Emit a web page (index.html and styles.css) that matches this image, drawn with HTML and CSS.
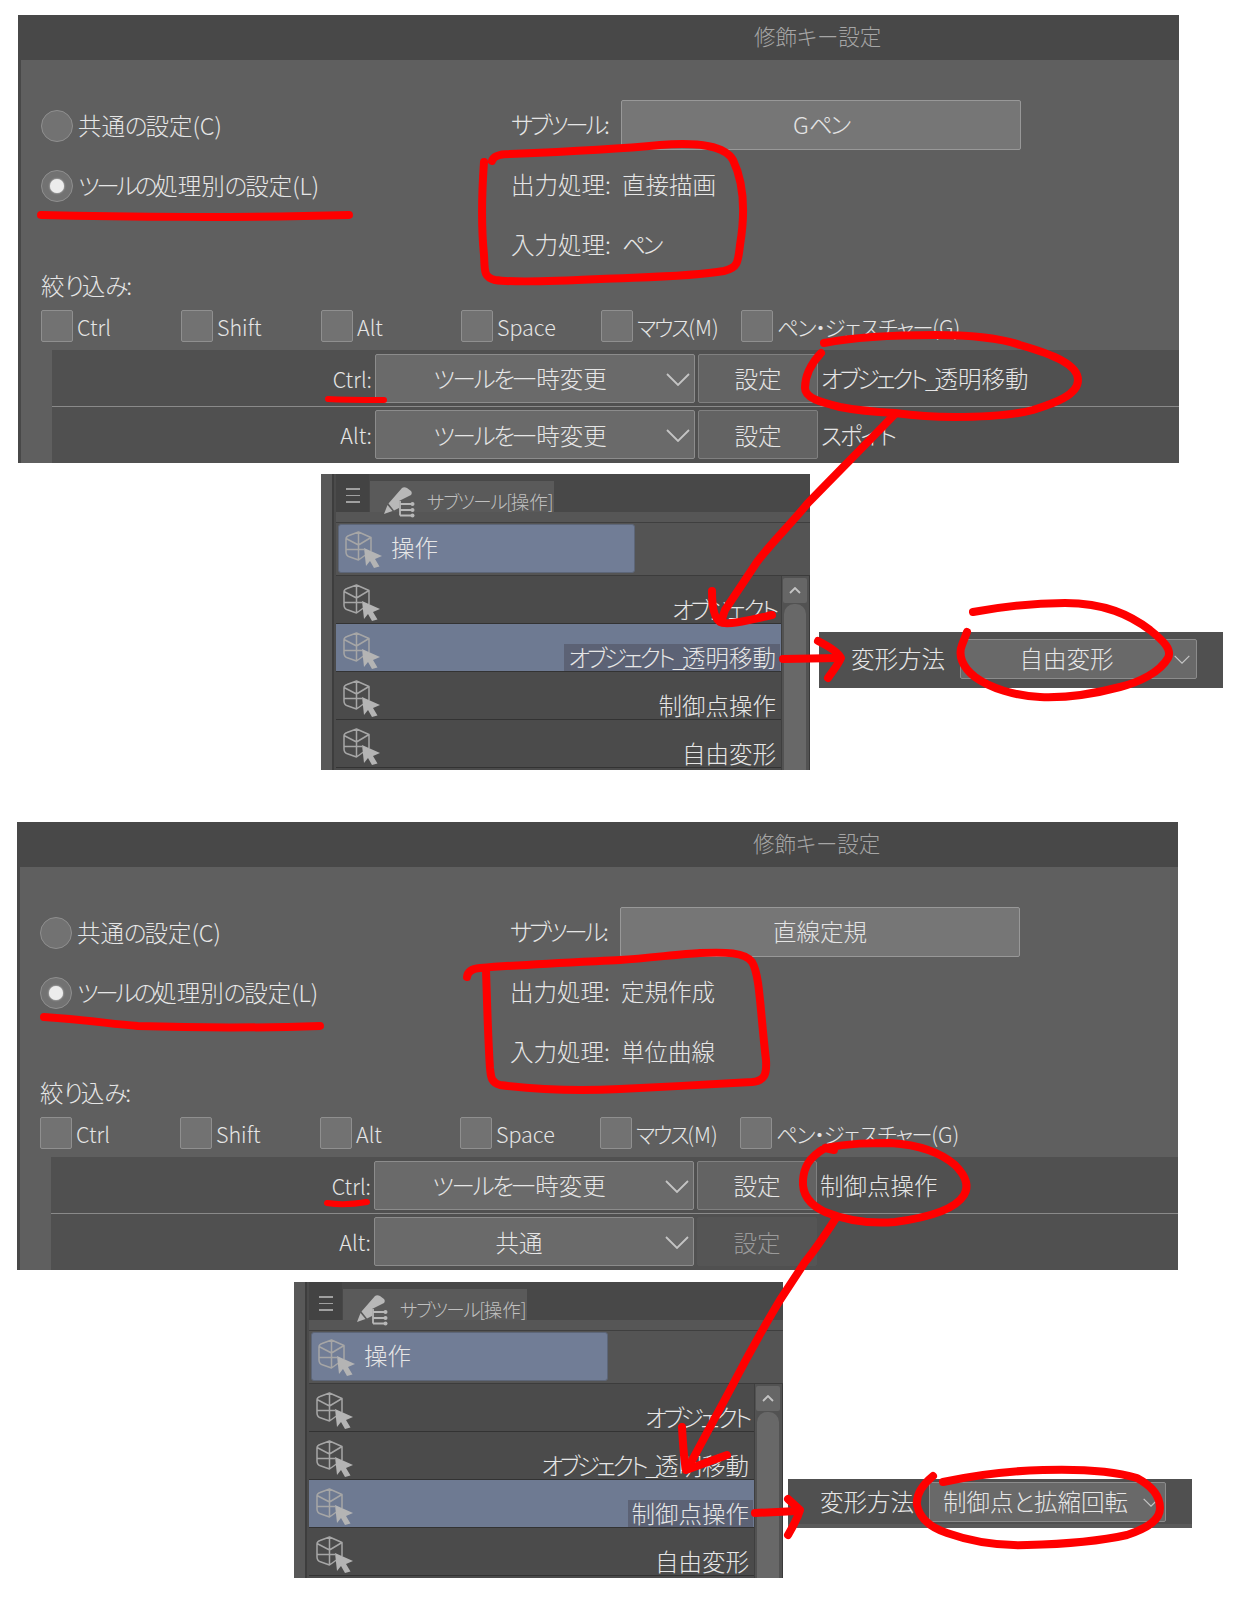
FILE: index.html
```html
<!DOCTYPE html>
<html lang="ja">
<head>
<meta charset="utf-8">
<title>修飾キー設定</title>
<link rel="stylesheet" href="styles.css">
</head>
<body>
<svg class="defs" aria-hidden="true">
  <symbol id="i-cube" viewBox="0 0 37 37">
    <path class="cube" d="M13.5 1 L26 6.500 V20 L13.5 29 L5 26 Q1 25 1 21 V8 Q1 5.500 4 4.500 Z M1 7.500 L13.500 14 L26 6.500 M13.500 1 V29 M1 18.500 H19"/>
    <path class="cursor" d="M19 17 L37 25 L30 28 L34.500 35.500 L29 37 L25 30 L21 35 Z"/>
  </symbol>
  <symbol id="i-tab" viewBox="0 0 31 31">
    <path class="tab-pen" d="M0 27 L3.500 18 L6 21 L8.500 24 Z M4.500 16.500 L18 1 Q20 -0.500 23 1 L27 4 Q28.500 6 27 8 L19 12 L15 14 V21 L10 23.500 Z"/>
    <path class="tab-tree" d="M16 17 H28 M16 23 H28 M16 28.500 H28 M16 14 V28.500"/>
    <circle class="tab-dot" cx="28.500" cy="17" r="2"/><circle class="tab-dot" cx="28.500" cy="23" r="2"/><circle class="tab-dot" cx="28.500" cy="28.500" r="2"/>
  </symbol>
  <symbol id="i-chev" viewBox="0 0 24 13"><path class="chev" d="M1 1 L12 12 L23 1"/></symbol>
</svg>

<section class="dialog dialog--a">
  <header class="dialog-title">修飾キー設定</header>
  <div class="dialog-body">
    <div class="form">
      <label class="radio"><span class="radio-dot"></span><span>共通<span class="k">の</span>設定(C)</span></label>
      <span class="form-label"><span class="k2">サブツール</span>:</span>
      <div class="tool-btn">G<span class="k">ペン</span></div>
      <label class="radio"><span class="radio-dot is-on"></span><span><span class="k2">ツールの</span>処理別<span class="k">の</span>設定(L)</span></label>
      <span class="form-label">出力処理:</span>
      <span class="form-value">直接描画</span>
      <span></span>
      <span class="form-label">入力処理:</span>
      <span class="form-value"><span class="k2">ペン</span></span>
    </div>
    <div class="filter-title"><span>絞<span class="k">り</span>込<span class="k">み</span>:</span></div>
    <div class="filters">
      <label class="check"><span class="check-box"></span>Ctrl</label>
      <label class="check"><span class="check-box"></span>Shift</label>
      <label class="check"><span class="check-box"></span>Alt</label>
      <label class="check"><span class="check-box"></span>Space</label>
      <label class="check"><span class="check-box"></span><span><span class="k">マウス</span>(M)</span></label>
      <label class="check"><span class="check-box"></span><span><span class="k1">ペン・ジェスチャー</span>(G)</span></label>
    </div>
    <div class="keys">
      <div class="key-row key-row--line">
        <span class="key-name">Ctrl:</span>
        <div class="select"><span><span class="k">ツールを</span>一時変更</span><svg class="select-chev"><use href="#i-chev"/></svg></div>
        <div class="set-btn">設定</div>
        <span class="key-tool"><span class="k2">オブジェクト_</span>透明移動</span>
      </div>
      <div class="key-row">
        <span class="key-name">Alt:</span>
        <div class="select"><span><span class="k">ツールを</span>一時変更</span><svg class="select-chev"><use href="#i-chev"/></svg></div>
        <div class="set-btn">設定</div>
        <span class="key-tool"><span class="k">スポイト</span></span>
      </div>
    </div>
  </div>
</section>

<section class="subtool subtool--a">
  <div class="subtool-rail"></div>
  <div class="subtool-main">
    <div class="subtool-tabs">
      <div class="menu-btn"><span></span><span></span><span></span></div>
      <div class="tab"><svg class="tab-icon"><use href="#i-tab"/></svg><span class="k1">サブツール[</span>操作]</div>
    </div>
    <div class="group-row">
      <div class="group-chip"><svg class="tool-icon"><use href="#i-cube"/></svg>操作</div>
    </div>
    <div class="list-wrap">
      <ul class="list">
        <li class="item"><svg class="tool-icon"><use href="#i-cube"/></svg><span class="item-name"><span class="k2">オブジェクト</span></span></li>
        <li class="item is-selected"><svg class="tool-icon"><use href="#i-cube"/></svg><span class="item-name"><span class="k2">オブジェクト_</span>透明移動</span></li>
        <li class="item"><svg class="tool-icon"><use href="#i-cube"/></svg><span class="item-name">制御点操作</span></li>
        <li class="item"><svg class="tool-icon"><use href="#i-cube"/></svg><span class="item-name">自由変形</span></li>
      </ul>
      <div class="scroll">
        <div class="scroll-up"><svg class="scroll-chev" viewBox="0 0 12 7"><path class="chev" d="M1 6 L6 1 L11 6"/></svg></div>
        <div class="scroll-thumb"></div>
      </div>
    </div>
  </div>
</section>

<div class="transform transform--a">
  <span class="transform-label">変形方法</span>
  <div class="transform-select">自由変形<svg class="transform-chev"><use href="#i-chev"/></svg></div>
</div>

<section class="dialog dialog--b">
  <header class="dialog-title">修飾キー設定</header>
  <div class="dialog-body">
    <div class="form">
      <label class="radio"><span class="radio-dot"></span><span>共通<span class="k">の</span>設定(C)</span></label>
      <span class="form-label"><span class="k2">サブツール</span>:</span>
      <div class="tool-btn">直線定規</div>
      <label class="radio"><span class="radio-dot is-on"></span><span><span class="k2">ツールの</span>処理別<span class="k">の</span>設定(L)</span></label>
      <span class="form-label">出力処理:</span>
      <span class="form-value">定規作成</span>
      <span></span>
      <span class="form-label">入力処理:</span>
      <span class="form-value">単位曲線</span>
    </div>
    <div class="filter-title"><span>絞<span class="k">り</span>込<span class="k">み</span>:</span></div>
    <div class="filters">
      <label class="check"><span class="check-box"></span>Ctrl</label>
      <label class="check"><span class="check-box"></span>Shift</label>
      <label class="check"><span class="check-box"></span>Alt</label>
      <label class="check"><span class="check-box"></span>Space</label>
      <label class="check"><span class="check-box"></span><span><span class="k">マウス</span>(M)</span></label>
      <label class="check"><span class="check-box"></span><span><span class="k1">ペン・ジェスチャー</span>(G)</span></label>
    </div>
    <div class="keys">
      <div class="key-row key-row--line">
        <span class="key-name">Ctrl:</span>
        <div class="select"><span><span class="k">ツールを</span>一時変更</span><svg class="select-chev"><use href="#i-chev"/></svg></div>
        <div class="set-btn">設定</div>
        <span class="key-tool">制御点操作</span>
      </div>
      <div class="key-row">
        <span class="key-name">Alt:</span>
        <div class="select">共通<svg class="select-chev"><use href="#i-chev"/></svg></div>
        <div class="set-btn is-disabled">設定</div>
        <span class="key-tool"></span>
      </div>
    </div>
  </div>
</section>

<section class="subtool subtool--b">
  <div class="subtool-rail"></div>
  <div class="subtool-main">
    <div class="subtool-tabs">
      <div class="menu-btn"><span></span><span></span><span></span></div>
      <div class="tab"><svg class="tab-icon"><use href="#i-tab"/></svg><span class="k1">サブツール[</span>操作]</div>
    </div>
    <div class="group-row">
      <div class="group-chip"><svg class="tool-icon"><use href="#i-cube"/></svg>操作</div>
    </div>
    <div class="list-wrap">
      <ul class="list">
        <li class="item"><svg class="tool-icon"><use href="#i-cube"/></svg><span class="item-name"><span class="k2">オブジェクト</span></span></li>
        <li class="item"><svg class="tool-icon"><use href="#i-cube"/></svg><span class="item-name"><span class="k2">オブジェクト_</span>透明移動</span></li>
        <li class="item is-selected"><svg class="tool-icon"><use href="#i-cube"/></svg><span class="item-name">制御点操作</span></li>
        <li class="item"><svg class="tool-icon"><use href="#i-cube"/></svg><span class="item-name">自由変形</span></li>
      </ul>
      <div class="scroll">
        <div class="scroll-up"><svg class="scroll-chev" viewBox="0 0 12 7"><path class="chev" d="M1 6 L6 1 L11 6"/></svg></div>
        <div class="scroll-thumb"></div>
      </div>
    </div>
  </div>
</section>

<div class="transform transform--b">
  <span class="transform-label">変形方法</span>
  <div class="transform-select">制御点と拡縮回転<svg class="transform-chev"><use href="#i-chev"/></svg></div>
</div>

<svg class="ink" viewBox="0 0 1237 1597" aria-hidden="true">
  <path d="M41 215 C120 217 250 218 349 215"/>
  <path d="M492 161 Q494 154 510 154 C560 152 620 149 660 145 C700 142 725 146 733 160 C745 185 745 215 740 245 C738 262 738 268 724 271 C690 277 640 277 600 279 C560 281 515 283 495 280 C483 277 485 270 484 255 C481 225 482 190 484 162"/>
  <path class="ink-thin" d="M328 399 C345 400 365 400 384 400"/>
  <path d="M824 343 C860 336 900 335 935 335 C975 335 1000 338 1020 345 C1055 355 1078 365 1078 380 C1078 395 1055 403 1033 410 C1010 416 985 417 954 417 C930 417 910 415 895 413 C875 412 855 410 840 407 C820 402 805 398 805 388 C805 378 808 367 821 353"/>
  <path d="M895 414 C870 440 845 465 808 503 C790 525 772 542 757 562 C745 580 735 595 725 610 L721 622"/>
  <path d="M712 591 C712 605 714 618 720 622 C726 626 750 620 772 615"/>
  <path d="M783 659 L838 658"/>
  <path d="M818 641 C830 647 838 652 841 658 C838 665 832 672 828 678"/>
  <path d="M973 612 C1005 606 1035 603 1065 603 C1105 603 1130 615 1150 630 C1165 642 1172 650 1168 658 C1160 672 1140 682 1120 687 C1090 695 1065 698 1040 697 C1015 696 990 688 975 677 C962 667 958 655 962 645 L967 632"/>

  <path d="M44 1017 C90 1020 110 1024 138 1026 C200 1028 260 1028 320 1026"/>
  <path d="M467 977 Q468 969 480 968 C530 964 580 962 620 960 C650 958 680 954 700 953 C725 952 745 952 752 962 C760 975 760 1010 766 1060 C767 1075 764 1081 752 1082 C720 1084 660 1087 620 1089 C580 1091 540 1090 500 1085 C490 1082 491 1075 490 1068 C488 1040 487 1000 486 970"/>
  <path class="ink-thin" d="M327 1203 C340 1205 355 1204 367 1202"/>
  <path d="M834 1150 L825 1148 C850 1143 870 1143 891 1143 C920 1145 940 1152 955 1165 C965 1175 970 1185 964 1195 C955 1210 925 1218 895 1222 C870 1224 845 1220 825 1212 C808 1204 802 1193 803 1180 C804 1168 808 1158 825 1148"/>
  <path d="M836 1218 C825 1235 815 1250 805 1262 L780 1300 C762 1330 748 1355 730 1390 L688 1468"/>
  <path d="M682 1427 C683 1445 684 1460 686 1470 L727 1455"/>
  <path d="M755 1513 L797 1511"/>
  <path d="M788 1499 L800 1510 C797 1520 792 1528 788 1535"/>
  <path d="M933 1476 C922 1485 916 1495 917 1505 C920 1520 932 1528 947 1533 C975 1543 1000 1546 1027 1545 C1070 1544 1105 1540 1127 1535 C1148 1528 1160 1520 1160 1508 C1160 1495 1150 1485 1137 1478 C1110 1470 1075 1469 1043 1470 C1005 1471 975 1475 943 1482"/>
</svg>
</body>
</html>
```
FILE: styles.css
```css
* { box-sizing: border-box; }

html, body {
  margin: 0;
  padding: 0;
}

body {
  position: relative;
  width: 1237px;
  height: 1597px;
  overflow: hidden;
  background: #fff;
  color: #e6e6e6;
  font-family: "Noto Sans CJK JP", "Noto Sans", sans-serif;
  font-size: 23.500px;
  font-weight: 300;
  font-feature-settings: "palt";
}

/* Narrow kana, as the UI font of the original sets them */
.k { letter-spacing: -2.200px; }
.k1 { letter-spacing: -1.400px; }
.k2 { letter-spacing: -3.300px; }

.defs { position: absolute; width: 0; height: 0; }

/* Collage: each screenshot is a window placed on the free canvas */
.dialog {
  position: absolute;
  width: 1161px;
  height: 448px;
  display: flex;
  flex-direction: column;
  background: #484848;
}
.dialog--a { left: 18px; top: 15px; }
.dialog--b { left: 17px; top: 822px; }

.dialog-title {
  height: 45px;
  flex: none;
  padding-left: 736px;
  line-height: 42px;
  font-size: 21.500px;
  color: #a6a6a6;
}

.dialog-body {
  flex: 1;
  margin-left: 3px;
  padding: 40px 0 0 20px;
  background: #5f5f5f;
  display: flex;
  flex-direction: column;
}

.form {
  display: grid;
  grid-template-columns: 470px 100px 1fr;
  grid-auto-rows: 50px;
  row-gap: 10px;
  align-items: center;
}

.radio {
  display: flex;
  align-items: center;
  gap: 5px;
  height: 50px;
  white-space: nowrap;
}
.radio-dot {
  position: relative;
  width: 32px;
  height: 32px;
  flex: none;
  margin-top: 2px;
  border-radius: 50%;
  background: #727272;
  border: 1px solid #8f8f8f;
}
.radio-dot.is-on::after {
  content: "";
  position: absolute;
  left: 8px;
  top: 8px;
  width: 14px;
  height: 14px;
  border-radius: 50%;
  background: #ececec;
  box-shadow: 0 0 2px #ececec;
}

.form-label { white-space: nowrap; padding-bottom: 2px; }
.form-value { margin-left: 11px; white-space: nowrap; padding-bottom: 2px; }

.tool-btn {
  width: 400px;
  height: 50px;
  margin-left: 10px;
  padding-bottom: 2px;
  display: flex;
  align-items: center;
  justify-content: center;
  background: #767676;
  border: 1px solid #989898;
  border-radius: 2px;
  color: #e4e4e4;
}

.filter-title {
  height: 34px;
  line-height: 30px;
}

.filters {
  display: grid;
  grid-template-columns: repeat(6, 140px);
  height: 32px;
  margin-top: 6px;
}
.check {
  display: flex;
  align-items: center;
  gap: 4px;
  white-space: nowrap;
  font-size: 21.500px;
}
.check-box {
  width: 32px;
  height: 32px;
  flex: none;
  background: #727272;
  border: 1px solid #8f8f8f;
  border-radius: 2px;
}

.keys {
  margin: 8px 0 0 11px;
  background: #505050;
  flex: 1;
}
.key-row {
  height: 55px;
  display: grid;
  grid-template-columns: 320px 320px 120px 1fr;
  column-gap: 3px;
  align-items: center;
}
.key-row--line {
  height: 57px;
  border-bottom: 1px solid #8a8a8a;
}

.key-name {
  text-align: right;
  font-size: 21.500px;
}
.select {
  position: relative;
  height: 49px;
  padding-right: 30px;
  display: flex;
  align-items: center;
  justify-content: center;
  background: #6a6a6a;
  border: 1px solid #8c8c8c;
  border-radius: 2px;
}
.select-chev {
  position: absolute;
  right: 4px;
  top: 18px;
  width: 24px;
  height: 13px;
}
.chev {
  fill: none;
  stroke: #c4c4c4;
  stroke-width: 1.800;
}
.set-btn {
  height: 49px;
  display: flex;
  align-items: center;
  justify-content: center;
  background: #636363;
  border: 1px solid #808080;
  border-radius: 2px;
}
.set-btn.is-disabled {
  background: #555;
  border-color: #555;
  color: #9a9a9a;
}
.key-tool { white-space: nowrap; }

/* Sub tool palette */
.subtool {
  position: absolute;
  width: 489px;
  height: 296px;
  display: flex;
  background: #4b4b4b;
  overflow: hidden;
}
.subtool--a { left: 321px; top: 474px; }
.subtool--b { left: 294px; top: 1282px; }

.subtool-rail {
  width: 13px;
  flex: none;
  background: #585858;
  border-right: 2px solid #3d3d3d;
}
.subtool-main {
  flex: 1;
  min-width: 0;
  display: flex;
  flex-direction: column;
  margin-left: 2px;
}
.subtool-tabs {
  height: 38px;
  flex: none;
  display: flex;
  gap: 1px;
  background: #484848;
}
.menu-btn {
  width: 33px;
  height: 38px;
  padding: 14px 0 0 10px;
  display: flex;
  flex-direction: column;
  gap: 5px;
  background: #434343;
}
.menu-btn span {
  display: block;
  width: 14px;
  height: 1.500px;
  background: #a0a0a0;
}
.tab {
  position: relative;
  width: 184px;
  height: 31px;
  margin-top: 7px;
  padding: 6px 0 0 57px;
  line-height: 28px;
  font-size: 18.500px;
  color: #c0c0c0;
  background: #5a5a5a;
  white-space: nowrap;
}
.tab-icon {
  position: absolute;
  left: 14px;
  top: 6px;
  width: 31px;
  height: 31px;
  overflow: visible;
}
.tab-pen { fill: #b8b8b8; }
.tab-tree { fill: none; stroke: #b8b8b8; stroke-width: 1.800; }
.tab-dot { fill: #b8b8b8; }

.group-row {
  height: 64px;
  flex: none;
  padding: 12px 0 2px 2px;
  background: #545454;
  border-bottom: 1px solid #3c3c3c;
  box-shadow: inset 0 10px 0 #565656, inset 0 11px 0 #3f3f3f;
}
.group-chip {
  position: relative;
  width: 297px;
  height: 49px;
  padding-left: 52px;
  line-height: 45px;
  background: #717d96;
  border-radius: 3px;
  border: 1px solid #5d6678;
}
.group-chip .tool-icon {
  position: absolute;
  left: 6px;
  top: 6px;
}

.tool-icon {
  display: block;
  width: 37px;
  height: 37px;
  flex: none;
}
.cube {
  fill: none;
  stroke: #a6a6a6;
  stroke-width: 1.500;
  stroke-linejoin: round;
}
.cursor { fill: #b4b4b4; }

.list-wrap {
  flex: 1;
  min-height: 0;
  display: flex;
}
.list {
  width: 445px;
  flex: none;
  margin: 0;
  padding: 0;
  list-style: none;
}
.item {
  position: relative;
  height: 48px;
  padding: 0 1px 0 0;
  display: flex;
  align-items: flex-end;
  justify-content: flex-end;
  background: #4b4b4b;
  border-bottom: 1px solid #333;
}
.item .tool-icon {
  position: absolute;
  left: 7px;
  top: 8px;
}
.item-name {
  display: block;
  padding: 0 4px;
  height: 27px;
  line-height: 27px;
  white-space: nowrap;
}
.item.is-selected { background: #6e7a92; }
.item.is-selected .item-name { background: #5c6275; }

.scroll {
  flex: 1;
  padding: 2px 2px 0 1px;
  background: #525252;
  border-left: 1px solid #3f3f3f;
  border-right: 1px solid #3a3a3a;
  display: flex;
  flex-direction: column;
  gap: 1px;
}
.scroll-up {
  height: 25px;
  flex: none;
  display: flex;
  align-items: center;
  justify-content: center;
  background: #666;
  border-radius: 2px;
}
.scroll-chev { width: 12px; height: 7px; }
.scroll-thumb {
  flex: 1;
  margin: 0 1px;
  background: #686868;
  border-radius: 10px 10px 0 0;
}

/* Popup strip */
.transform {
  position: absolute;
  width: 404px;
  display: flex;
  align-items: flex-start;
  gap: 15px;
  padding-left: 32px;
  background: #505050;
}
.transform--a { left: 819px; top: 632px; height: 56px; padding-top: 7px; }
.transform--b { left: 788px; top: 1479px; height: 49px; padding-top: 3px; border-bottom: 4px solid #5a5a5a; }
.transform-label {
  width: 94px;
  height: 40px;
  line-height: 38px;
  white-space: nowrap;
}
.transform-select {
  position: relative;
  width: 237px;
  height: 40px;
  padding: 0 24px 2px 0;
  display: flex;
  align-items: center;
  justify-content: center;
  background: #696969;
  border: 1px solid #8c8c8c;
  border-radius: 2px;
  white-space: nowrap;
}
.transform-chev {
  position: absolute;
  right: 6px;
  top: 15px;
  width: 16px;
  height: 9px;
}

/* Red hand-drawn annotation over everything */
.ink {
  position: absolute;
  left: 0;
  top: 0;
  width: 1237px;
  height: 1597px;
  pointer-events: none;
}
.ink path {
  fill: none;
  stroke: #f00;
  stroke-width: 8;
  stroke-linecap: round;
  stroke-linejoin: round;
}
.ink .ink-thin { stroke-width: 6; }
```
